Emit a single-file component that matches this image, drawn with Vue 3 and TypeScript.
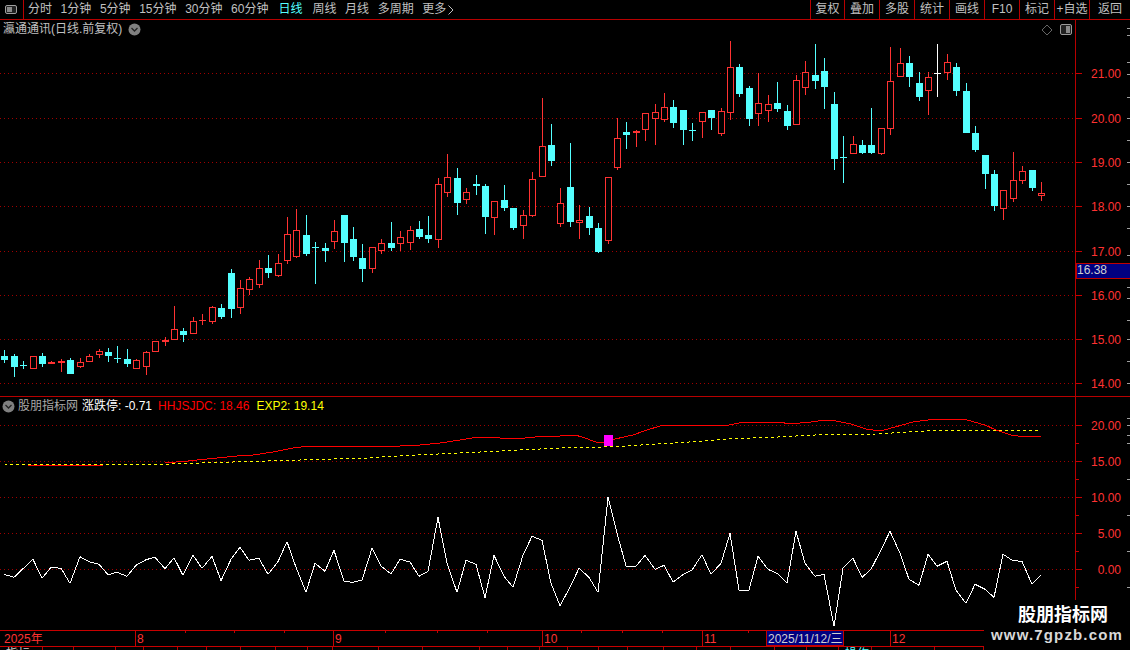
<script setup lang="ts">
type Kind = 'r' | 'c' | 'w'
type Candle = [number, number, number, number, Kind]

const raw: Candle[] = [
  [356,360,350,363,'c'],[356,367,354,377,'c'],[365,366,361,369,'c'],[356,369,356,369,'r'],[356,364,353,367,'c'],
  [362,364,361,364,'r'],[361,363,359,372,'r'],[360,374,358,374,'c'],[362,367,358,368,'r'],[356,362,354,362,'r'],
  [351,355,349,358,'r'],[352,356,348,362,'c'],[358,359,346,363,'c'],[359,364,349,367,'c'],[360,369,359,369,'r'],
  [352,367,351,375,'r'],[341,352,341,352,'r'],[340,342,337,346,'r'],[329,340,306,340,'r'],[331,335,328,342,'c'],
  [321,334,317,334,'r'],[320,321,314,325,'r'],[307,322,306,324,'r'],[308,317,304,319,'c'],[273,309,269,318,'c'],
  [288,308,280,314,'r'],[279,290,277,295,'r'],[268,285,260,288,'r'],[268,273,255,278,'c'],[263,276,254,277,'r'],
  [234,261,217,264,'r'],[230,257,209,258,'r'],[235,254,215,256,'c'],[247,248,242,284,'c'],[248,251,243,262,'c'],
  [231,242,220,249,'r'],[215,243,215,262,'c'],[239,257,227,261,'c'],[258,269,244,282,'c'],[247,269,247,273,'r'],
  [243,251,239,254,'r'],[243,248,222,251,'c'],[237,244,231,251,'r'],[230,243,226,250,'r'],[229,237,221,239,'c'],
  [235,239,216,243,'c'],[184,240,178,248,'r'],[177,193,154,197,'r'],[178,203,168,215,'c'],[192,200,188,204,'r'],
  [184,186,175,195,'c'],[186,217,184,234,'c'],[201,218,201,235,'r'],[200,208,185,211,'c'],[208,228,208,230,'c'],
  [215,226,210,239,'r'],[179,216,172,217,'r'],[146,177,98,177,'r'],[145,161,124,166,'c'],[203,224,188,227,'r'],
  [187,222,143,227,'c'],[220,223,205,239,'r'],[216,228,207,235,'c'],[228,252,223,253,'c'],[177,241,177,244,'r'],
  [138,168,118,170,'r'],[132,135,122,149,'c'],[131,133,130,147,'r'],[113,130,113,141,'r'],[112,119,104,145,'r'],
  [107,120,93,122,'r'],[107,123,100,128,'c'],[110,130,110,145,'c'],[130,131,123,141,'c'],[112,122,112,138,'r'],
  [110,118,110,130,'c'],[111,134,108,136,'r'],[67,113,41,120,'r'],[67,94,64,97,'c'],[88,119,86,126,'c'],
  [103,114,73,126,'r'],[104,111,95,122,'r'],[103,109,82,112,'c'],[111,126,105,130,'c'],[80,125,75,125,'r'],
  [72,88,61,95,'r'],[75,81,44,89,'c'],[71,87,58,109,'c'],[104,159,92,170,'c'],[157,158,136,183,'c'],
  [144,154,136,154,'r'],[145,153,140,154,'c'],[145,153,108,154,'c'],[128,154,128,155,'r'],[81,129,47,135,'r'],
  [63,77,48,77,'r'],[63,77,56,87,'c'],[83,97,72,101,'c'],[77,91,72,115,'r'],[73,74,44,97,'w'],
  [62,73,54,80,'r'],[67,91,63,96,'c'],[91,133,83,133,'c'],[133,150,126,152,'c'],[155,174,155,189,'c'],
  [174,206,170,211,'c'],[190,209,190,220,'r'],[180,199,152,202,'r'],[171,181,166,184,'r'],[170,188,170,191,'c'],
  [193,196,182,201,'r'],
]

const colX = (i: number): number => Math.round(4.3 + i * 9.425)
const candles = raw.map(([t, b, wt, wb, k], i) => ({ x: colX(i), t, b, wt, wb, k, thin: b - t <= 2 }))

const mainGrid = [
  { y: 73, t: '21.00' }, { y: 118, t: '20.00' }, { y: 162, t: '19.00' }, { y: 206, t: '18.00' },
  { y: 251, t: '17.00' }, { y: 295, t: '16.00' }, { y: 339, t: '15.00' }, { y: 383, t: '14.00' },
]
const subGrid = [
  { y: 425, t: '20.00' }, { y: 461, t: '15.00' }, { y: 497, t: '10.00' }, { y: 533, t: '5.00' }, { y: 569, t: '0.00' },
]
const edgeMain = [28, 35, 62, 74, 97, 118, 140, 162, 184, 206, 228, 255, 267, 278, 287, 298, 320, 339, 361, 383]
const edgeSub = [418, 425, 435, 443, 479, 515, 551, 587]
const minorSub = [443, 479, 515, 551, 587]

const whiteV = [
  253,262,236,208,265,232,235,280,200,215,223,254,247,259,226,209,202,236,203,256,
  196,235,199,272,208,172,211,205,253,215,155,232,307,220,244,181,274,277,270,175,
  228,252,208,216,259,244,82,220,307,211,223,323,196,259,292,196,139,151,280,347,
  292,235,262,307,22,130,228,229,196,238,226,276,254,240,194,253,220,130,300,300,
  199,238,250,280,124,220,259,253,409,235,205,262,238,180,124,190,268,286,193,229,
  214,301,340,283,298,322,193,212,214,283,256,
]
const whitePts = whiteV.map((v, i) => `${colX(i)},${(490 + v / 3).toFixed(1)}`).join(' ')

const redA = '28,465 103,465'
const redB = '165,463 188,461 207,459 217,458 237,456 253,455 273,452 293,448 310,446 377,446 400,446 420,445 440,443 460,440 478,437 500,438 525,438 545,436 560,436 575,435 582,437 596,442 604,442 615,439 633,435 647,430 660,426 669,425 705,425 724,426 734,424 745,422 760,422 780,422 789,424 811,422 825,420 836,421 851,424 866,429 873,430 884,430 895,427 913,422 935,419 951,419 967,420 985,425 996,430 1011,435 1018,436 1041,436'
const yellowA = '4,464 100,465 170,464 200,463 233,462 267,461 300,460 333,459 367,458 397,456 480,452 560,448 604,447 625,446 658,444 705,441 727,439 778,437 815,435 876,434 924,431 945,430 996,430 1041,431'

const axisTicks = [185, 234, 284, 385, 437, 487, 581, 622, 662, 748]
const axisMarks = [
  { x: 135, t: '8' }, { x: 333, t: '9' }, { x: 542, t: '10' }, { x: 702, t: '11' }, { x: 890, t: '12' },
]

const leftTabs = ['分时', '1分钟', '5分钟', '15分钟', '30分钟', '60分钟', '日线', '周线', '月线', '多周期']
const rightBtns = ['复权', '叠加', '多股', '统计', '画线', 'F10', '标记', '+自选', '返回']

const statusEdges = [43, 74, 116, 144, 178, 207, 241, 276, 308, 333, 379, 423, 480, 508, 540, 568, 599, 628, 664, 697, 731, 775, 807, 839, 872, 935, 984]
const statusText: Record<number, { t: string; cyan?: boolean }> = {
  0: { t: '指标' }, 1: { t: '.' }, 24: { t: '操作', cyan: true },
}
const statusCells = statusEdges.map((e, i) => ({
  w: e - (i ? statusEdges[i - 1] : 0),
  label: statusText[i]?.t ?? '',
  cyan: statusText[i]?.cyan ?? false,
}))
</script>

<template>
  <div class="app">
    <header class="toolbar">
      <button class="layout-btn" type="button" aria-label="layout">
        <svg width="13" height="10" viewBox="0 0 13 10">
          <rect x="0.5" y="0.5" width="11" height="8" rx="1.5" fill="#222" stroke="#a0a0a0" />
          <rect x="2" y="2" width="5" height="5" fill="#8a8a8a" />
        </svg>
      </button>
      <nav class="tabs">
        <span v-for="t in leftTabs" :key="t" class="tab" :class="{ on: t === '日线' }">{{ t }}</span>
        <span class="tab more">更多
          <svg width="6" height="10" viewBox="0 0 6 10"><path d="M0.5 0.5 5 5 0.5 9.5" fill="none" stroke="#c0c0c0" /></svg>
        </span>
      </nav>
      <div class="actions">
        <span v-for="b in rightBtns" :key="b" class="action">{{ b }}</span>
      </div>
    </header>

    <section class="pane main-pane">
      <div class="pane-head title">
        <span>瀛通通讯(日线.前复权)</span>
        <svg class="chev" width="13" height="13" viewBox="0 0 13 13">
          <circle cx="6.5" cy="6.5" r="6" fill="#808080" />
          <path d="M3.5 5 6.5 8 9.5 5" fill="none" stroke="#222" stroke-width="1.3" />
        </svg>
      </div>
      <svg class="chart" width="1130" height="376" viewBox="0 20 1130 376">
        <g shape-rendering="crispEdges">
          <line v-for="g in mainGrid" :key="g.y" x1="0" x2="1075" :y1="g.y + 0.5" :y2="g.y + 0.5" class="grid" />
          <rect x="1075" y="20" width="1" height="376" class="axis" />
          <rect v-for="g in mainGrid" :key="'t' + g.y" x="1076" :y="g.y" width="6" height="1" class="tick" />
          <rect v-for="y in edgeMain" :key="'e' + y" x="1127" :y="y" width="3" height="1" class="edge" />
          <template v-for="c in candles" :key="c.x">
            <template v-if="c.k === 'r'">
              <rect :x="c.x" :y="c.wt" width="1" :height="c.wb - c.wt" fill="#ff3232" v-if="c.thin" />
              <template v-else>
                <rect v-if="c.wt < c.t" :x="c.x" :y="c.wt" width="1" :height="c.t - c.wt" fill="#ff3232" />
                <rect v-if="c.wb > c.b" :x="c.x" :y="c.b" width="1" :height="c.wb - c.b" fill="#ff3232" />
                <rect :x="c.x - 2.5" :y="c.t + 0.5" width="6" :height="c.b - c.t - 1" fill="#000" stroke="#ff3232" />
              </template>
              <rect v-if="c.thin" :x="c.x - 3" :y="c.t" width="7" :height="c.b - c.t" fill="#ff3232" />
            </template>
            <template v-else>
              <rect :x="c.x" :y="c.wt" width="1" :height="c.wb - c.wt" :fill="c.k === 'w' ? '#ffffff' : '#54ffff'" />
              <rect :x="c.x - 3" :y="c.t" width="7" :height="c.b - c.t" :fill="c.k === 'w' ? '#ffffff' : '#54ffff'" />
            </template>
          </template>
        </g>
        <text v-for="g in mainGrid" :key="'l' + g.y" x="1121" :y="g.y + 5" text-anchor="end" class="lbl">{{ g.t }}</text>
        <g shape-rendering="crispEdges">
          <rect x="1076" y="263" width="54" height="15" fill="#000080" stroke="#c00000" />
        </g>
        <text x="1077" y="274" class="tag">16.38</text>
        <g transform="translate(1047 30)">
          <path d="M0 -5 5 0 0 5 -5 0Z" fill="none" stroke="#666" />
        </g>
        <rect x="1060.5" y="24.5" width="11" height="10" rx="1.5" fill="#222" stroke="#9a9a9a" />
        <rect x="1066" y="26" width="4" height="7" fill="#8a8a8a" />
      </svg>
    </section>

    <section class="pane sub-pane">
      <div class="pane-head legend">
        <svg class="chev-l" width="13" height="13" viewBox="0 0 13 13">
          <circle cx="6.5" cy="6.5" r="6" fill="#808080" />
          <path d="M3.5 5 6.5 8 9.5 5" fill="none" stroke="#222" stroke-width="1.3" />
        </svg>
        <span class="l-name">股朋指标网</span>
        <span class="l-white">涨跌停: -0.71</span>
        <span class="l-red">HHJSJDC: 18.46</span>
        <span class="l-yellow">EXP2: 19.14</span>
      </div>
      <svg class="chart" width="1130" height="233" viewBox="0 397 1130 233">
        <g shape-rendering="crispEdges">
          <line v-for="g in subGrid" :key="g.y" x1="0" x2="1075" :y1="g.y + 0.5" :y2="g.y + 0.5" class="grid" />
          <rect x="1075" y="397" width="1" height="233" class="axis" />
          <rect v-for="g in subGrid" :key="'t' + g.y" x="1076" :y="g.y" width="6" height="1" class="tick" />
          <rect v-for="y in minorSub" :key="'m' + y" x="1076" :y="y" width="3" height="1" class="tick" />
          <rect v-for="y in edgeSub" :key="'e' + y" x="1127" :y="y" width="3" height="1" class="edge" />
          <polyline :points="redA" class="red-line" />
          <polyline :points="redB" class="red-line" />
          <polyline :points="yellowA" class="yellow-line" />
          <rect x="604" y="435" width="9" height="11" fill="#ff00ff" />
          <polyline :points="whitePts" class="white-line" />
        </g>
        <text v-for="g in subGrid" :key="'l' + g.y" x="1121" :y="g.y + 5" text-anchor="end" class="lbl">{{ g.t }}</text>
      </svg>
    </section>

    <div class="date-bar">
      <svg width="1130" height="17" viewBox="0 630 1130 17">
        <g shape-rendering="crispEdges">
          <rect x="0" y="630" width="1130" height="1" class="axis-b" />
          <rect x="0" y="646" width="1130" height="1" class="axis-b" />
          <rect v-for="x in axisTicks" :key="x" :x="x" y="631" width="1" height="2" class="axis-b" />
          <rect v-for="m in axisMarks" :key="m.x" :x="m.x" y="631" width="1" height="15" class="axis-b" />
          <rect x="766.5" y="630.5" width="77" height="15" fill="#000080" stroke="#c00000" />
        </g>
        <text x="4" y="643" class="lbl">2025年</text>
        <text v-for="m in axisMarks" :key="'d' + m.x" :x="m.x + 2" y="643" class="lbl">{{ m.t }}</text>
        <text x="768" y="643" class="tag">2025/11/12/三</text>
      </svg>
    </div>

    <div class="status-row">
      <span
        v-for="(c, i) in statusCells"
        :key="i"
        class="cell"
        :class="{ cyan: c.cyan }"
        :style="{ width: c.w + 'px' }"
      >{{ c.label }}</span>
    </div>

    <div class="watermark">
      <div class="wm-title">股朋指标网</div>
      <div class="wm-url">www.7gpzb.com</div>
    </div>
  </div>
</template>

<style>
html, body { margin: 0; background: #000; overflow: hidden; }
</style>

<style scoped>
.app {
  position: relative;
  width: 1130px;
  height: 650px;
  overflow: hidden;
  background: #000;
  display: flex;
  flex-direction: column;
  font: 12px "Liberation Sans", "Noto Sans CJK SC", sans-serif;
  color: #c0c0c0;
}
.toolbar {
  flex: 0 0 20px;
  height: 20px;
  box-sizing: border-box;
  display: flex;
  align-items: stretch;
  border-bottom: 1px solid #b80000;
}
.layout-btn {
  width: 24px;
  padding: 0;
  margin: 0;
  background: none;
  border: 0;
  border-right: 1px solid #b80000;
  display: flex;
  align-items: center;
  justify-content: center;
}
.tabs {
  display: flex;
  align-items: center;
  gap: 8.6px;
  padding-left: 4px;
}
.tab { white-space: nowrap; line-height: 19px; }
.tab.on { color: #54ffff; margin: 0 1.4px; }
.more { display: flex; align-items: center; gap: 2px; }
.actions {
  margin-left: auto;
  display: flex;
  width: 320px;
}
.action {
  width: 35px;
  box-sizing: border-box;
  border-left: 1px solid #b80000;
  text-align: center;
  line-height: 19px;
  white-space: nowrap;
}
.action:first-child { width: 34px; }
.action:last-child { width: 41px; }
.pane { position: relative; }
.main-pane {
  flex: 0 0 377px;
  height: 377px;
  box-sizing: border-box;
  border-bottom: 1px solid #b80000;
}
.sub-pane { flex: 0 0 233px; height: 233px; }
.chart { display: block; }
.pane-head {
  position: absolute;
  left: 0;
  display: flex;
  align-items: center;
  white-space: nowrap;
  line-height: 16px;
}
.title { top: 1px; padding-left: 3px; }
.chev { margin-left: 6px; }
.legend { top: 1px; padding-left: 2px; }
.chev-l { margin-right: 3px; }
.l-name { color: #a8a8a8; }
.l-white { color: #ffffff; margin-left: 4px; }
.l-red { color: #ff0000; margin-left: 6px; }
.l-yellow { color: #ffff00; margin-left: 7px; }
.grid { stroke: #a00000; stroke-width: 1; stroke-dasharray: 1 3; }
.axis { fill: #b80000; }
.tick { fill: #c80000; }
.edge { fill: #a0a0a0; }
.axis-b { fill: #c80000; }
.lbl {
  font: 12px "Liberation Sans", "Noto Sans CJK SC", sans-serif;
  fill: #ff3232;
}
.tag {
  font: 12px "Liberation Sans", "Noto Sans CJK SC", sans-serif;
  fill: #d0d0d0;
}
.red-line, .yellow-line, .white-line { fill: none; stroke-width: 1; }
.red-line { stroke: #ff0000; }
.yellow-line { stroke: #ffff00; stroke-dasharray: 3 3; }
.white-line { stroke: #ffffff; }
.date-bar { flex: 0 0 17px; height: 17px; }
.date-bar svg { display: block; }
.status-row { display: flex; height: 12px; flex: 0 0 12px; }
.cell {
  box-sizing: border-box;
  border-right: 1px solid #b80000;
  padding: 1px 0 0 6px;
  line-height: 12px;
  white-space: nowrap;
  overflow: hidden;
  color: #d0d0d0;
}
.cell.cyan { color: #54ffff; }
.watermark {
  position: absolute;
  left: 984px;
  top: 600px;
  width: 146px;
  height: 50px;
  background: #000;
  text-align: center;
}
.wm-title {
  margin-top: 3px;
  font: 700 18px/20px "Noto Sans CJK SC", sans-serif;
  color: #fff;
  padding-left: 12px;
}
.wm-url {
  font: 700 15px/17px "Liberation Sans", sans-serif;
  color: #d8d8d8;
  letter-spacing: 1.15px;
  margin-top: 3px;
}
</style>
